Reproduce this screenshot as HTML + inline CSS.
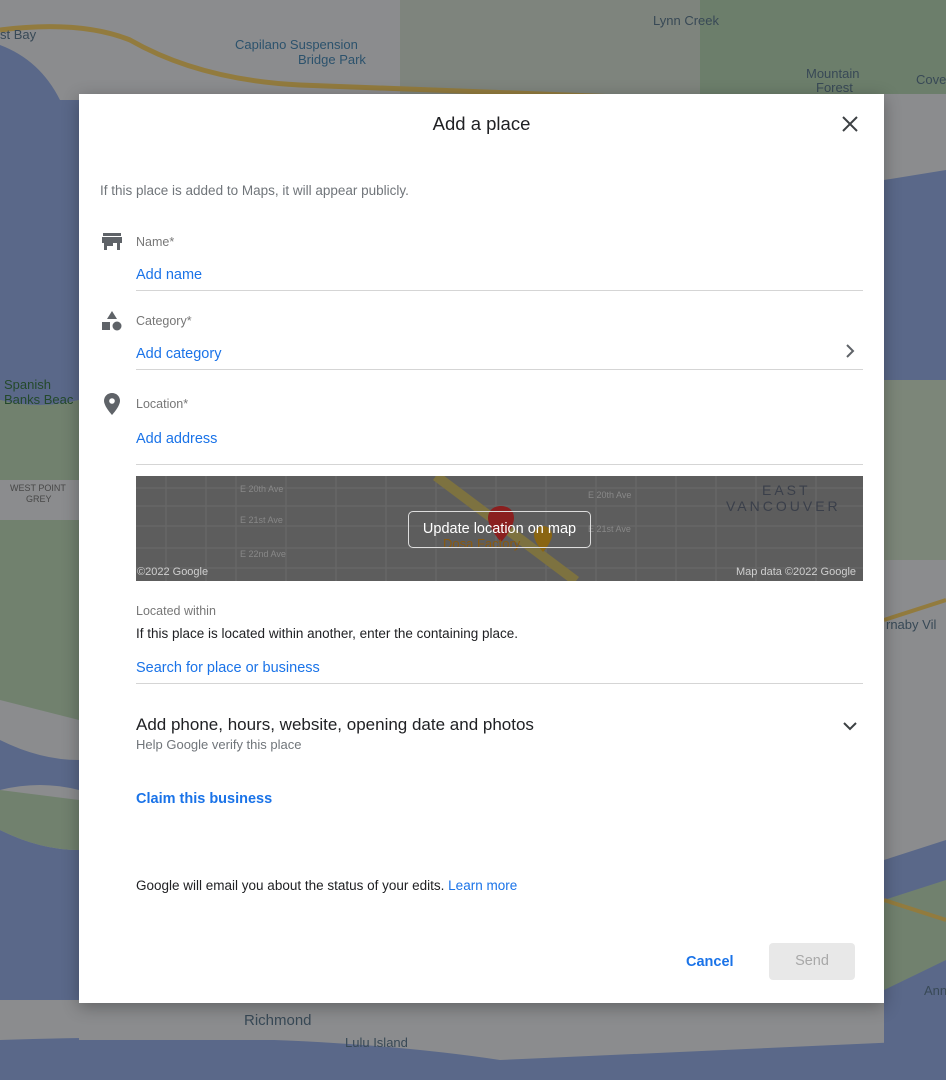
<!DOCTYPE html>
<html><head><meta charset="utf-8">
<style>
*{margin:0;padding:0;box-sizing:border-box}
html,body{width:946px;height:1080px}
body{position:relative;overflow:hidden;font-family:"Liberation Sans",Arial,sans-serif;background:#8b8c8f}
.abs{position:absolute}
.lbl{position:absolute;font-size:13px;color:#5e7a90}
.dlg{position:absolute;left:79px;top:94px;width:805px;height:909px;background:#fff;box-shadow:0 4px 16px rgba(0,0,0,.3)}
.t{position:absolute;white-space:nowrap}
.line{position:absolute;left:57px;width:727px;height:1px;background:#d5d5d5}
.blue{color:#1a73e8;font-size:14.5px}
.gl{color:#777;font-size:12.5px}
</style></head><body>
<div class="abs" style="left:0;top:0;width:946px;height:1080px;background:#e8eaed"></div>
<svg class="abs" style="left:0;top:0" width="946" height="1080">
<path d="M0 45 Q40 60 60 100 L79 100 L79 400 Q40 410 0 400Z" fill="#96aee5"/>
<path d="M0 400 Q40 410 79 400 L79 720 L0 700Z" fill="#bcd8b8"/>
<path d="M0 480 H79 V520 H0Z" fill="#e8eaed"/>
<path d="M0 740 Q40 760 79 760 L79 790 Q40 780 0 790Z" fill="#96aee5"/>
<path d="M0 830 Q40 850 79 850 L79 1000 L0 1000Z" fill="#96aee5"/>
<path d="M0 790 L79 800 L79 850 Q40 850 0 830Z" fill="#bcd8b8"/>
<path d="M884 180 L946 170 L946 380 L884 380Z" fill="#96aee5"/>
<path d="M884 380 L946 380 L946 560 L884 560Z" fill="#cfdfca"/>
<path d="M884 860 L946 840 L946 1080 L884 1080Z" fill="#96aee5"/>
<path d="M884 900 L946 880 L946 960 L884 990Z" fill="#bcd8b8"/>
<path d="M0 1040 Q300 1030 500 1060 L946 1040 L946 1080 L0 1080Z" fill="#96aee5"/>
<path d="M79 1003 L884 1003 L884 1040 L79 1040Z" fill="#e8eaed"/>
<path d="M700 0 L946 0 L946 94 L700 94Z" fill="#b5d2b3"/>
<path d="M400 0 L700 0 L700 94 L400 94Z" fill="#d3ddd0"/>
<path d="M0 30 Q80 20 130 40 Q200 80 300 85 L700 100" stroke="#f3cd68" stroke-width="5" fill="none"/>
<path d="M884 620 L946 600 M884 900 L946 920" stroke="#f3cd68" stroke-width="4"/>
</svg>
<div class="lbl" style="left:0;top:27px">st Bay</div>
<div class="lbl" style="left:235px;top:37px;color:#4a89b5">Capilano Suspension</div>
<div class="lbl" style="left:298px;top:52px;color:#4a89b5">Bridge Park</div>
<div class="lbl" style="left:653px;top:13px">Lynn Creek</div>
<div class="lbl" style="left:806px;top:66px">Mountain</div>
<div class="lbl" style="left:816px;top:80px">Forest</div>
<div class="lbl" style="left:916px;top:72px">Cove</div>
<div class="lbl" style="left:4px;top:377px;color:#3c7a48">Spanish</div>
<div class="lbl" style="left:4px;top:392px;color:#3c7a48">Banks Beac</div>
<div class="lbl" style="left:10px;top:483px;font-size:9px;color:#777">WEST POINT</div>
<div class="lbl" style="left:26px;top:494px;font-size:9px;color:#777">GREY</div>
<div class="lbl" style="left:244px;top:1012px;font-size:15px">Richmond</div>
<div class="lbl" style="left:345px;top:1035px">Lulu Island</div>
<div class="lbl" style="left:886px;top:617px">rnaby Vil</div>
<div class="lbl" style="left:924px;top:983px">Ann</div>
<div class="abs" style="left:0;top:0;width:946px;height:1080px;background:rgba(0,0,0,.4)"></div>

<div class="dlg">
 <div class="t" style="left:0;width:805px;text-align:center;top:19px;font-size:18.5px;color:#202124">Add a place</div>
 <svg class="abs" style="left:762px;top:21px" width="18" height="18"><path d="M2 2L16 16M16 2L2 16" stroke="#3c4043" stroke-width="2"/></svg>
 <div class="t" style="left:21px;top:89px;font-size:13.5px;color:#70757a">If this place is added to Maps, it will appear publicly.</div>

 <svg class="abs" style="left:23px;top:139px" width="20" height="18"><rect x="1" y="0" width="18" height="3" fill="#5f6368"/><rect x="0" y="4" width="20" height="6" fill="#5f6368"/><rect x="2" y="10" width="3" height="7" fill="#5f6368"/><rect x="15" y="10" width="3" height="7" fill="#5f6368"/><rect x="5" y="10" width="6" height="3" fill="#5f6368"/></svg>
 <div class="t gl" style="left:57px;top:141px">Name*</div>
 <div class="t blue" style="left:57px;top:173px">Add name</div>
 <div class="line" style="top:196px"></div>

 <svg class="abs" style="left:22px;top:216px" width="22" height="22"><path d="M11 1L16 9H6Z" fill="#5f6368"/><rect x="1" y="12" width="8" height="8" fill="#5f6368"/><circle cx="16" cy="16" r="4.5" fill="#5f6368"/></svg>
 <div class="t gl" style="left:57px;top:220px">Category*</div>
 <div class="t blue" style="left:57px;top:252px">Add category</div>
 <svg class="abs" style="left:766px;top:250px" width="10" height="14"><path d="M2 1L8 7L2 13" stroke="#5f6368" stroke-width="2" fill="none"/></svg>
 <div class="line" style="top:275px"></div>

 <svg class="abs" style="left:25px;top:299px" width="16" height="22"><path d="M8 0C3.6 0 0 3.4 0 7.8 0 13.5 8 22 8 22S16 13.5 16 7.8C16 3.4 12.4 0 8 0Z" fill="#5f6368"/><circle cx="8" cy="8" r="2.8" fill="#fff"/></svg>
 <div class="t gl" style="left:57px;top:303px">Location*</div>
 <div class="t blue" style="left:57px;top:337px">Add address</div>
 <div class="line" style="top:370px"></div>

 <div class="abs" style="left:57px;top:382px;width:727px;height:105px;background:#5d5d5d;overflow:hidden">
  <svg class="abs" style="left:0;top:0" width="727" height="105">
   <g stroke="#676767" stroke-width="1.5">
   <path d="M0 12H727M0 30H727M0 50H727M0 72H727M0 92H727"/>
   <path d="M30 0V105M70 0V105M100 0V105M150 0V105M200 0V105M250 0V105M300 0V105M360 0V105M410 0V105M460 0V105M500 0V105M540 0V105M580 0V105M620 0V105M680 0V105"/>
   </g>
   <path d="M300 0L440 105" stroke="#7d7240" stroke-width="10"/>
   <path d="M365 30C356 30 352 36 352 42 352 52 365 66 365 66S378 52 378 42C378 36 374 30 365 30Z" fill="#8a1f1f"/>
   <path d="M407 50C401 50 398 55 398 59 398 66 407 76 407 76S416 66 416 59C416 55 413 50 407 50Z" fill="#8a6512"/>
  </svg>
  <div class="t" style="left:104px;top:8px;font-size:9px;color:#888">E 20th Ave</div>
  <div class="t" style="left:104px;top:39px;font-size:9px;color:#888">E 21st Ave</div>
  <div class="t" style="left:104px;top:73px;font-size:9px;color:#888">E 22nd Ave</div>
  <div class="t" style="left:452px;top:14px;font-size:9px;color:#888">E 20th Ave</div>
  <div class="t" style="left:452px;top:48px;font-size:9px;color:#888">E 21st Ave</div>
  <div class="t" style="left:307px;top:60px;font-size:13px;color:#8a5a10">Dosa Factory</div>
  <div class="t" style="left:626px;top:6px;font-size:14px;letter-spacing:3px;color:#3a3f4a">EAST</div>
  <div class="t" style="left:590px;top:22px;font-size:14px;letter-spacing:3px;color:#3a3f4a">VANCOUVER</div>
  <div class="t" style="left:1px;top:90px;font-size:11px;color:#cfcfcf">©2022 Google</div>
  <div class="t" style="left:600px;top:90px;font-size:11px;color:#cfcfcf">Map data ©2022 Google</div>
  <div class="abs" style="left:272px;top:35px;width:183px;height:37px;border:1px solid #ddd;border-radius:5px;color:#fff;font-size:14.5px;text-align:center;line-height:35px">Update location on map</div>
 </div>

 <div class="t gl" style="left:57px;top:510px">Located within</div>
 <div class="t" style="left:57px;top:532px;font-size:13.5px;color:#202124">If this place is located within another, enter the containing place.</div>
 <div class="t blue" style="left:57px;top:566px">Search for place or business</div>
 <div class="line" style="top:589px"></div>

 <div class="t" style="left:57px;top:621px;font-size:17px;color:#202124">Add phone, hours, website, opening date and photos</div>
 <div class="t" style="left:57px;top:643px;font-size:13px;color:#70757a">Help Google verify this place</div>
 <svg class="abs" style="left:764px;top:627px" width="14" height="10"><path d="M1 2L7 8L13 2" stroke="#3c4043" stroke-width="2" fill="none"/></svg>

 <div class="t" style="left:57px;top:697px;font-size:14.5px;color:#1a73e8;font-weight:bold">Claim this business</div>

 <div class="t" style="left:57px;top:784px;font-size:13.5px;color:#202124">Google will email you about the status of your edits. <span style="color:#1a73e8">Learn more</span></div>

 <div class="t" style="left:607px;top:860px;font-size:14.5px;color:#1a73e8;font-weight:bold">Cancel</div>
 <div class="abs" style="left:690px;top:849px;width:86px;height:37px;background:#e8e8e8;border-radius:4px;color:#a8a8a8;font-size:14.5px;text-align:center;line-height:37px">Send</div>
</div>
</body></html>
